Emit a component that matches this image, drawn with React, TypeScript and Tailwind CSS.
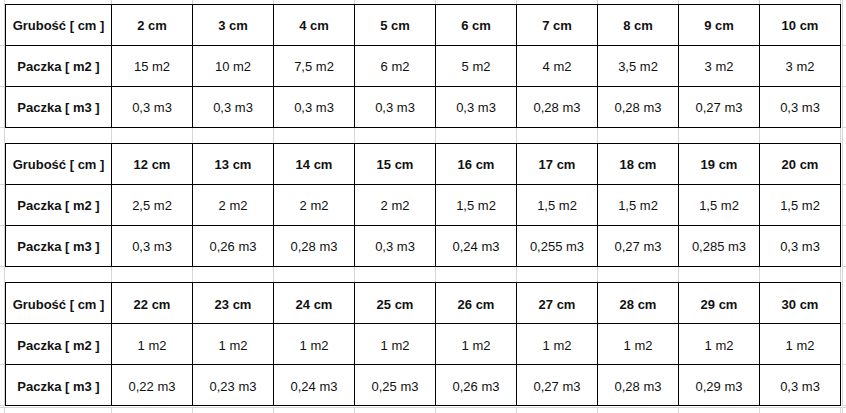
import React from "react";

type Block = { cm: string[]; m2: string[]; m3: string[] };

const blocks: Block[] = [
  {
    cm: ["2 cm", "3 cm", "4 cm", "5 cm", "6 cm", "7 cm", "8 cm", "9 cm", "10 cm"],
    m2: ["15 m2", "10 m2", "7,5 m2", "6 m2", "5 m2", "4 m2", "3,5 m2", "3 m2", "3 m2"],
    m3: ["0,3 m3", "0,3 m3", "0,3 m3", "0,3 m3", "0,3 m3", "0,28 m3", "0,28 m3", "0,27 m3", "0,3 m3"],
  },
  {
    cm: ["12 cm", "13 cm", "14 cm", "15 cm", "16 cm", "17 cm", "18 cm", "19 cm", "20 cm"],
    m2: ["2,5 m2", "2 m2", "2 m2", "2 m2", "1,5 m2", "1,5 m2", "1,5 m2", "1,5 m2", "1,5 m2"],
    m3: ["0,3 m3", "0,26 m3", "0,28 m3", "0,3 m3", "0,24 m3", "0,255 m3", "0,27 m3", "0,285 m3", "0,3 m3"],
  },
  {
    cm: ["22 cm", "23 cm", "24 cm", "25 cm", "26 cm", "27 cm", "28 cm", "29 cm", "30 cm"],
    m2: ["1 m2", "1 m2", "1 m2", "1 m2", "1 m2", "1 m2", "1 m2", "1 m2", "1 m2"],
    m3: ["0,22 m3", "0,23 m3", "0,24 m3", "0,25 m3", "0,26 m3", "0,27 m3", "0,28 m3", "0,29 m3", "0,3 m3"],
  },
];

const nine = [0, 1, 2, 3, 4, 5, 6, 7, 8];

function StripRow({ h, topLine = false }: { h: string; topLine?: boolean }) {
  return (
    <div className={`flex ${h} ${topLine ? "border-t border-[#d6d6d6] mt-px" : ""}`}>
      <div className="w-[5px] shrink-0 border-r border-[#d6d6d6]" />
      <div className="w-px shrink-0" />
      <div className="w-[106px] shrink-0 border-r border-[#d6d6d6]" />
      {nine.map((i) => (
        <div key={i} className="w-[81px] shrink-0 border-r border-[#d6d6d6]" />
      ))}
      <div className="w-[5px] shrink-0 ml-px border-l border-[#d6d6d6]" />
    </div>
  );
}

function TableRow({ label, values, bold }: { label: string; values: string[]; bold: boolean }) {
  return (
    <div className="flex h-[41px]">
      <div className="w-[5px] shrink-0 border-r border-b border-[#d6d6d6]" />
      <div className="w-px shrink-0 bg-black" />
      <div className="w-[106px] shrink-0 border-r border-b border-black flex items-center justify-center pt-[2px] font-bold">
        {label}
      </div>
      {values.map((v, i) => (
        <div
          key={i}
          className={`w-[81px] shrink-0 border-r border-b border-black flex items-center justify-center pt-[2px] ${
            bold ? "font-bold" : "font-normal"
          }`}
        >
          {v}
        </div>
      ))}
      <div className="w-[5px] shrink-0 ml-px border-l border-b border-[#d6d6d6]" />
    </div>
  );
}

function TableTop() {
  return (
    <div className="flex h-px">
      <div className="w-[5px] shrink-0 border-r border-[#d6d6d6]" />
      <div className="w-[836px] shrink-0 bg-black" />
      <div className="w-[5px] shrink-0 ml-px border-l border-[#d6d6d6]" />
    </div>
  );
}

function Table({ b }: { b: Block }) {
  return (
    <div className="flex flex-col">
      <TableTop />
      <TableRow label="Grubość [ cm ]" values={b.cm} bold />
      <TableRow label="Paczka [ m2 ]" values={b.m2} bold={false} />
      <TableRow label="Paczka [ m3 ]" values={b.m3} bold={false} />
    </div>
  );
}

export default function App() {
  return (
    <div className="w-[846px] h-[413px] overflow-hidden bg-white text-[13px] leading-normal text-[#111] font-['Liberation_Sans',Arial,sans-serif] flex flex-col">
      <StripRow h="h-[4px]" />
      <Table b={blocks[0]} />
      <StripRow h="h-[16px]" />
      <Table b={blocks[1]} />
      <StripRow h="h-[16px]" />
      <Table b={blocks[2]} />
      <StripRow h="h-[6px]" topLine />
    </div>
  );
}
